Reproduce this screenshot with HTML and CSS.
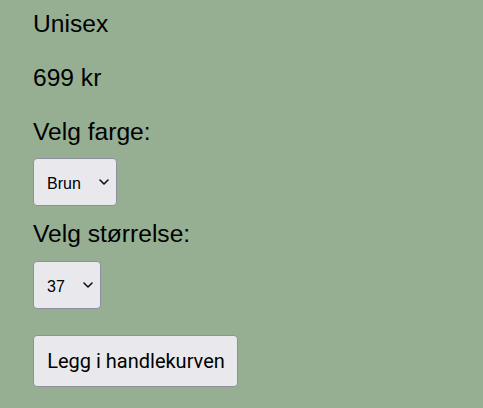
FILE: index.html
```html
<!DOCTYPE html>
<html lang="no">
<head>
<meta charset="utf-8">
<title>Produkt</title>
<link rel="stylesheet" href="styles.css">
</head>
<body>
<main class="product">
  <p class="line">Unisex</p>
  <p class="line price">699 kr</p>
  <label class="line label" for="farge">Velg farge:</label>
  <span class="select-wrap select-colour">
    <select id="farge" class="select">
      <option>Brun</option>
      <option>Svart</option>
    </select>
    <svg class="chevron" width="10" height="6" viewBox="0 0 10 6" aria-hidden="true"><path d="M1 1l4 4 4-4" fill="none" stroke="#111" stroke-width="1.6" stroke-linecap="round" stroke-linejoin="round"/></svg>
  </span>
  <label class="line label label-size" for="storrelse">Velg størrelse:</label>
  <span class="select-wrap select-size">
    <select id="storrelse" class="select">
      <option>37</option>
      <option>38</option>
    </select>
    <svg class="chevron" width="10" height="6" viewBox="0 0 10 6" aria-hidden="true"><path d="M1 1l4 4 4-4" fill="none" stroke="#111" stroke-width="1.6" stroke-linecap="round" stroke-linejoin="round"/></svg>
  </span>
  <button class="buy" type="button">Legg i handlekurven</button>
</main>
</body>
</html>
```
FILE: styles.css
```css
html, body {
  margin: 0;
  background: #96af93;
}
.product {
  display: flex;
  flex-direction: column;
  align-items: flex-start;
  padding: 10px 33px 0;
  font-family: "Liberation Sans", Arial, sans-serif;
  color: #000;
}
.line {
  margin: 0;
  font-size: 24.6px;
  line-height: 28px;
}
.price {
  margin-top: 26px;
}
.label {
  margin-top: 26px;
}
.label-size {
  margin-top: 14px;
}
.select-wrap {
  position: relative;
  display: inline-block;
  margin-top: 12px;
}
.select-size {
  margin-top: 13px;
}
.select {
  appearance: none;
  -webkit-appearance: none;
  box-sizing: border-box;
  height: 48px;
  margin: 0;
  padding: 2px 0 0 13px;
  font-family: "Liberation Sans", Arial, sans-serif;
  font-size: 16px;
  color: #000;
  background: #e9e9ed;
  border: 1px solid #8f8f9d;
  border-radius: 4px;
  display: block;
}
.select-colour .select {
  width: 84px;
}
.select-size .select {
  width: 68px;
}
.chevron {
  position: absolute;
  right: 8px;
  top: 21px;
  pointer-events: none;
}
.buy {
  box-sizing: border-box;
  margin-top: 26px;
  width: 205px;
  height: 52px;
  padding: 0 0 0 1px;
  font-family: Roboto, "Liberation Sans", sans-serif;
  font-size: 20px;
  color: #000;
  background: #e9e9ed;
  border: 1px solid #8f8f9d;
  border-radius: 4px;
}
```
